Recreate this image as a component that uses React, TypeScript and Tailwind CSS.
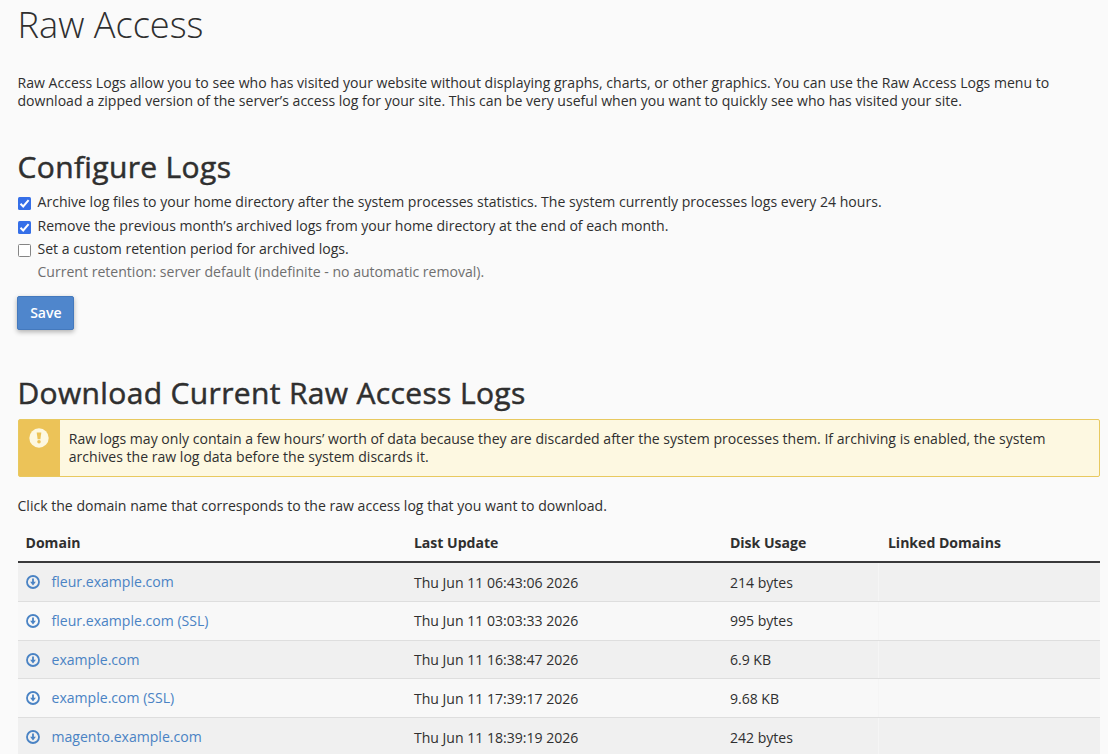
const logs = [
  { domain: "fleur.example.com", updated: "Thu Jun 11 06:43:06 2026", usage: "214 bytes" },
  { domain: "fleur.example.com (SSL)", updated: "Thu Jun 11 03:03:33 2026", usage: "995 bytes" },
  { domain: "example.com", updated: "Thu Jun 11 16:38:47 2026", usage: "6.9 KB" },
  { domain: "example.com (SSL)", updated: "Thu Jun 11 17:39:17 2026", usage: "9.68 KB" },
  { domain: "magento.example.com", updated: "Thu Jun 11 18:39:19 2026", usage: "242 bytes" },
];

function Checkbox({ checked = false }: { checked?: boolean }) {
  return (
    <span
      role="checkbox"
      aria-checked={checked}
      className={
        checked
          ? "mt-1 flex size-[13px] shrink-0 items-center justify-center rounded-[1.5px] bg-[#356fe8]"
          : "mt-1 block size-[13px] shrink-0 rounded-[1.5px] border border-[#858585] bg-white"
      }
    >
      {checked && (
        <svg viewBox="0 0 13 13" className="size-[13px]" fill="none" stroke="white" strokeWidth="2">
          <path d="M2.5 6.8 5.2 9.5 10.6 3.2" />
        </svg>
      )}
    </span>
  );
}

function DownloadIcon() {
  return (
    <svg viewBox="0 0 14 14" className="size-3.5 shrink-0">
      <circle cx="7" cy="7" r="6" fill="none" stroke="currentColor" strokeWidth="1.8" />
      <path d="M6.1 3.6h1.8v3.1h2L7 10.4 4.1 6.7h2z" fill="currentColor" />
    </svg>
  );
}

export default function App() {
  return (
    <main className="h-[754px] w-[1108px] overflow-hidden bg-[#fafafa] pl-[17.5px] pr-2 font-['Open_Sans',sans-serif] text-[14.07px] leading-[18px] text-[#2f2f2f]">
      <h1 className="h-[74px] text-[36.2px] font-light leading-[48px] whitespace-nowrap">Raw Access</h1>
      <p className="h-[71px] whitespace-nowrap">
        Raw Access Logs allow you to see who has visited your website without displaying graphs, charts, or other graphics. You can use the Raw Access Logs menu to
        <br />
        download a zipped version of the server’s access log for your site. This can be very useful when you want to quickly see who has visited your site.
      </p>

      <h2 className="h-12 text-[30px] font-medium leading-[44px] tracking-[0.35px] whitespace-nowrap [-webkit-text-stroke:0.5px_#2f2f2f]">Configure Logs</h2>
      <div className="flex flex-col whitespace-nowrap">
        <label className="flex h-6 gap-[7px]"><Checkbox checked />Archive log files to your home directory after the system processes statistics. The system currently processes logs every 24 hours.</label>
        <label className="flex h-[23px] gap-[7px]"><Checkbox checked />Remove the previous month’s archived logs from your home directory at the end of each month.</label>
        <label className="flex h-[23px] gap-[7px]"><Checkbox />Set a custom retention period for archived logs.</label>
        <p className="pl-5 text-[#6f6f6f]">Current retention: server default (indefinite - no automatic removal).</p>
      </div>
      <button className="mt-[15px] -ml-[0.1px] h-[34px] w-[57px] rounded-[2px] border border-[#4479bd] bg-[#4f86cc] font-semibold text-white shadow-[0_2px_5px_rgba(0,0,0,0.3)]">
        Save
      </button>

      <h2 className="mt-[41px] h-12 text-[30px] font-medium leading-[44px] tracking-[0.35px] whitespace-nowrap [-webkit-text-stroke:0.5px_#2f2f2f]">Download Current Raw Access Logs</h2>
      <div className="flex h-[58px] rounded-[2px] border border-[#e8c95f] bg-[#fdf8e1]">
        <div className="flex w-[41px] shrink-0 justify-center bg-[#ecc358] pt-2">
          <svg viewBox="0 0 20 20" className="size-5">
            <circle cx="10" cy="10" r="9.7" fill="#fdf8e1" />
            <path d="M7.7 4.6h4.6l-.9 6.6H8.6z" fill="#ecc358" />
            <circle cx="10" cy="13.8" r="1.8" fill="#ecc358" />
          </svg>
        </div>
        <p className="pl-[9.3px] pt-[10px] whitespace-nowrap">
          Raw logs may only contain a few hours’ worth of data because they are discarded after the system processes them. If archiving is enabled, the system
          <br />
          archives the raw log data before the system discards it.
        </p>
      </div>
      <p className="mt-5 h-[27px] whitespace-nowrap">Click the domain name that corresponds to the raw access log that you want to download.</p>

      <div className="whitespace-nowrap">
        <div className="grid h-[39.2px] grid-cols-[388.4px_316px_158px_1fr] items-center border-b-2 border-[#39393b] font-bold *:px-2">
          <span>Domain</span>
          <span>Last Update</span>
          <span>Disk Usage</span>
          <span>Linked Domains</span>
        </div>
        {logs.map((log) => (
          <div
            key={log.domain}
            className="grid h-[38.75px] grid-cols-[388.4px_316px_158px_1fr] items-center border-b border-[#dedede] odd:bg-[#f8f8f8] even:bg-[#f0f0f0] *:px-2"
          >
            <a href="#" className="flex items-center gap-3 text-[#4a83c4]">
              <DownloadIcon />
              <span>{log.domain}</span>
            </a>
            <span className="pt-px">{log.updated}</span>
            <span className="pt-px">{log.usage}</span>
            <span className="-ml-[2px] h-full border-l border-[#f5f5f5]" />
          </div>
        ))}
      </div>
    </main>
  );
}
